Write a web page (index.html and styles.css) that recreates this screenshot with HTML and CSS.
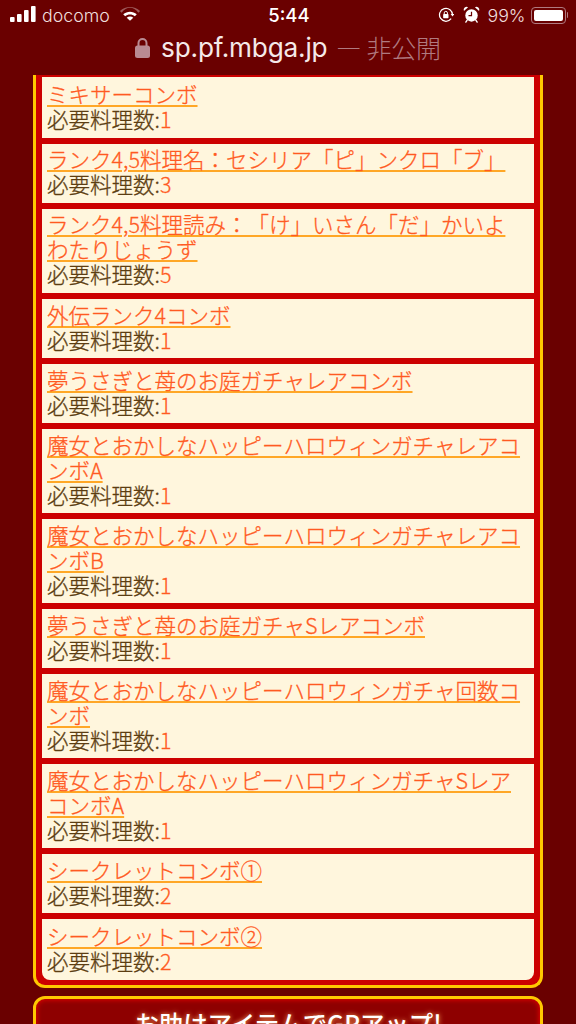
FILE: index.html
```html
<!DOCTYPE html>
<html lang="ja">
<head>
<meta charset="utf-8">
<title>sp.pf.mbga.jp</title>
<link rel="stylesheet" href="styles.css">
</head>
<body>
<header class="chrome">
  <div class="status">
    <div class="status-left">
      <svg class="signal" viewBox="0 0 26 16" width="26" height="16"><rect x="0" y="11" width="4.6" height="5" rx="1"/><rect x="7" y="8" width="4.6" height="8" rx="1"/><rect x="14" y="4" width="4.6" height="12" rx="1"/><rect x="21" y="0" width="4.6" height="16" rx="1"/></svg>
      <span class="carrier">docomo</span>
      <svg class="wifi" viewBox="0 0 24 16" width="22" height="15"><path d="M1 5.2C7.2-.4 16.8-.4 23 5.2l-1.900 2C16-.0 8-.0 2.900 7.200z" fill="#fff" opacity=".35"/><path d="M4.600 8.900C8.800 5 15.200 5 19.400 8.900l-2.100 2.200C14.200 8.300 9.800 8.300 6.700 11.100z" fill="#fff"/><path d="M8.400 12.600c2.100-1.700 5.100-1.700 7.200 0L12 16z" fill="#fff"/></svg>
    </div>
    <div class="time">5:44</div>
    <div class="status-right">
      <svg class="rotlock" viewBox="0 0 18 18" width="16" height="16"><path d="M14.800 13.200A7.300 7.300 0 1 1 16.300 9" fill="none" stroke="#fff" stroke-width="1.400"/><path d="M14.200 7.800h4.200l-2.100 2.800z" fill="#fff"/><rect x="5.800" y="8" width="6" height="4.600" rx=".8" fill="#fff"/><path d="M7 8V6.700a1.800 1.800 0 0 1 3.600 0V8" fill="none" stroke="#fff" stroke-width="1.100"/></svg>
      <svg class="alarm" viewBox="0 0 18 18" width="17" height="17"><circle cx="9" cy="10" r="6.600" fill="#fff"/><path d="M9 6v4.300H5.800" fill="none" stroke="#6a0000" stroke-width="1.300"/><path d="M1 5.300A3.200 3.200 0 0 1 5.400 1.200zM17 5.300A3.200 3.200 0 0 0 12.600 1.200z" fill="#fff"/><path d="M4.400 15l-1.400 2M13.600 15l1.400 2" stroke="#fff" stroke-width="1.500" stroke-linecap="round"/></svg>
      <span class="battery-pct">99%</span>
      <span class="battery"><span class="battery-fill"></span></span>
      <span class="battery-cap"></span>
    </div>
  </div>
  <div class="urlbar">
    <svg class="lock" viewBox="0 0 15 21" width="15" height="21"><path d="M3.500 9V6a4 4 0 0 1 8 0v3" fill="none" stroke="#b98a92" stroke-width="2"/><rect x="0" y="8.500" width="15" height="12.500" rx="2.500" fill="#b98a92"/></svg>
    <span class="host">sp.pf.mbga.jp</span>
    <span class="private">— 非公開</span>
  </div>
</header>

<main class="page">
  <section class="panel">
    <ul class="combo-list">
      <li class="combo"><a class="combo-link" href="#">ミキサーコンボ</a><br>必要料理数:<span class="num">1</span></li>
      <li class="combo"><a class="combo-link" href="#">ランク4,5料理名：セシリア「ピ」ンクロ「ブ」</a><br>必要料理数:<span class="num">3</span></li>
      <li class="combo"><a class="combo-link" href="#">ランク4,5料理読み：「け」いさん「だ」かいよわたりじょうず</a><br>必要料理数:<span class="num">5</span></li>
      <li class="combo mid"><a class="combo-link" href="#">外伝ランク4コンボ</a><br>必要料理数:<span class="num">1</span></li>
      <li class="combo mid"><a class="combo-link" href="#">夢うさぎと苺のお庭ガチャレアコンボ</a><br>必要料理数:<span class="num">1</span></li>
      <li class="combo mid"><a class="combo-link" href="#">魔女とおかしなハッピーハロウィンガチャレアコンボA</a><br>必要料理数:<span class="num">1</span></li>
      <li class="combo mid"><a class="combo-link" href="#">魔女とおかしなハッピーハロウィンガチャレアコンボB</a><br>必要料理数:<span class="num">1</span></li>
      <li class="combo mid"><a class="combo-link" href="#">夢うさぎと苺のお庭ガチャSレアコンボ</a><br>必要料理数:<span class="num">1</span></li>
      <li class="combo mid"><a class="combo-link" href="#">魔女とおかしなハッピーハロウィンガチャ回数コンボ</a><br>必要料理数:<span class="num">1</span></li>
      <li class="combo mid"><a class="combo-link" href="#">魔女とおかしなハッピーハロウィンガチャSレアコンボA</a><br>必要料理数:<span class="num">1</span></li>
      <li class="combo mid"><a class="combo-link" href="#">シークレットコンボ①</a><br>必要料理数:<span class="num">2</span></li>
      <li class="combo"><a class="combo-link" href="#">シークレットコンボ②</a><br>必要料理数:<span class="num">2</span></li>
    </ul>
  </section>
  <a class="promo" href="#">お助けアイテムでGPアップ!</a>
</main>
</body>
</html>
```

FILE: styles.css
```css
* { box-sizing: border-box; }
html, body { margin: 0; padding: 0; }
body {
  width: 576px;
  height: 1024px;
  overflow: hidden;
  background: #6a0000;
  font-family: "Noto Sans CJK JP", "Noto Sans", sans-serif;
}

.chrome { height: 75px; color: #fff; font-family: Inter, "Noto Sans CJK JP", sans-serif; }

.status {
  display: grid;
  grid-template-columns: 1fr auto 1fr;
  align-items: center;
  height: 30px;
  padding: 0 8px 0 10px;
  font-size: 17.8px;
  font-weight: 300;
}
.status-left { display: flex; align-items: center; }
.signal { fill: #fff; margin-bottom: 2px; }
.carrier { margin-left: 6px; color: #f0dede; }
.wifi { margin-left: 9px; margin-bottom: 3px; }
.time { font-weight: 500; font-size: 18.5px; }
.status-right { display: flex; align-items: center; justify-content: flex-end; }
.alarm { margin-left: 9px; margin-bottom: 1px; }
.battery-pct { margin-left: 7px; color: #f0dede; }
.battery {
  display: block;
  width: 35px;
  height: 17px;
  margin-left: 5px;
  padding: 2px;
  border: 1px solid #b07a80;
  border-radius: 4px;
}
.battery-fill { display: block; height: 100%; background: #fff; border-radius: 2px; }
.battery-cap { width: 1.500px; height: 6px; margin-left: 1px; background: #b07a80; border-radius: 0 1px 1px 0; }

.urlbar {
  display: flex;
  align-items: center;
  justify-content: center;
  height: 34px;
  font-size: 26.2px;
  letter-spacing: -.2px;
}
.lock { margin-right: 11px; }
.host { color: #f5e9e9; }
.private { margin-left: 9px; color: #b07a80; font-family: "Noto Sans CJK JP", sans-serif; font-weight: 300; font-size: 25px; }

.page { padding: 0 33px; }

.panel {
  background: #cc0000;
  border: 3px solid #ffc800;
  border-top: 0;
  border-radius: 0 0 12px 12px;
  padding: 2px 6px 5px;
}

.combo-list {
  list-style: none;
  margin: 0;
  padding: 0;
  display: flex;
  flex-direction: column;
  gap: 6px;
}

.combo {
  background: #fff6dd;
  padding: 2px 9px 7px 5px;
  font-size: 21.5px;
  font-weight: 300;
  line-height: 25px;
  color: #5c3d11;
  text-spacing-trim: space-all;
  font-kerning: none;
  -webkit-text-stroke: .3px currentColor;
}
.combo.mid { padding-top: 3px; padding-bottom: 6px; }
.combo:first-child { padding-top: 4px; }
.combo:last-child { padding-top: 4px; padding-bottom: 7px; border-radius: 0 0 8px 8px; }

.combo-link {
  color: #ff5a22;
  text-decoration: underline;
  text-decoration-color: #ffa726;
  text-decoration-thickness: 2px;
  text-underline-offset: 2px;
}
.num { color: #ff5a22; }

.promo {
  display: block;
  margin-top: 8px;
  height: 60px;
  padding-top: 9px;
  border: 3px solid #ffc800;
  border-radius: 12px;
  background: #8e0000;
  box-shadow: inset 0 0 5px 1px #e00000;
  color: #fff;
  font-size: 24.4px;
  font-weight: 500;
  line-height: 30px;
  text-align: center;
  text-decoration: none;
  text-shadow: 0 0 5px #ffb060;
}
```
